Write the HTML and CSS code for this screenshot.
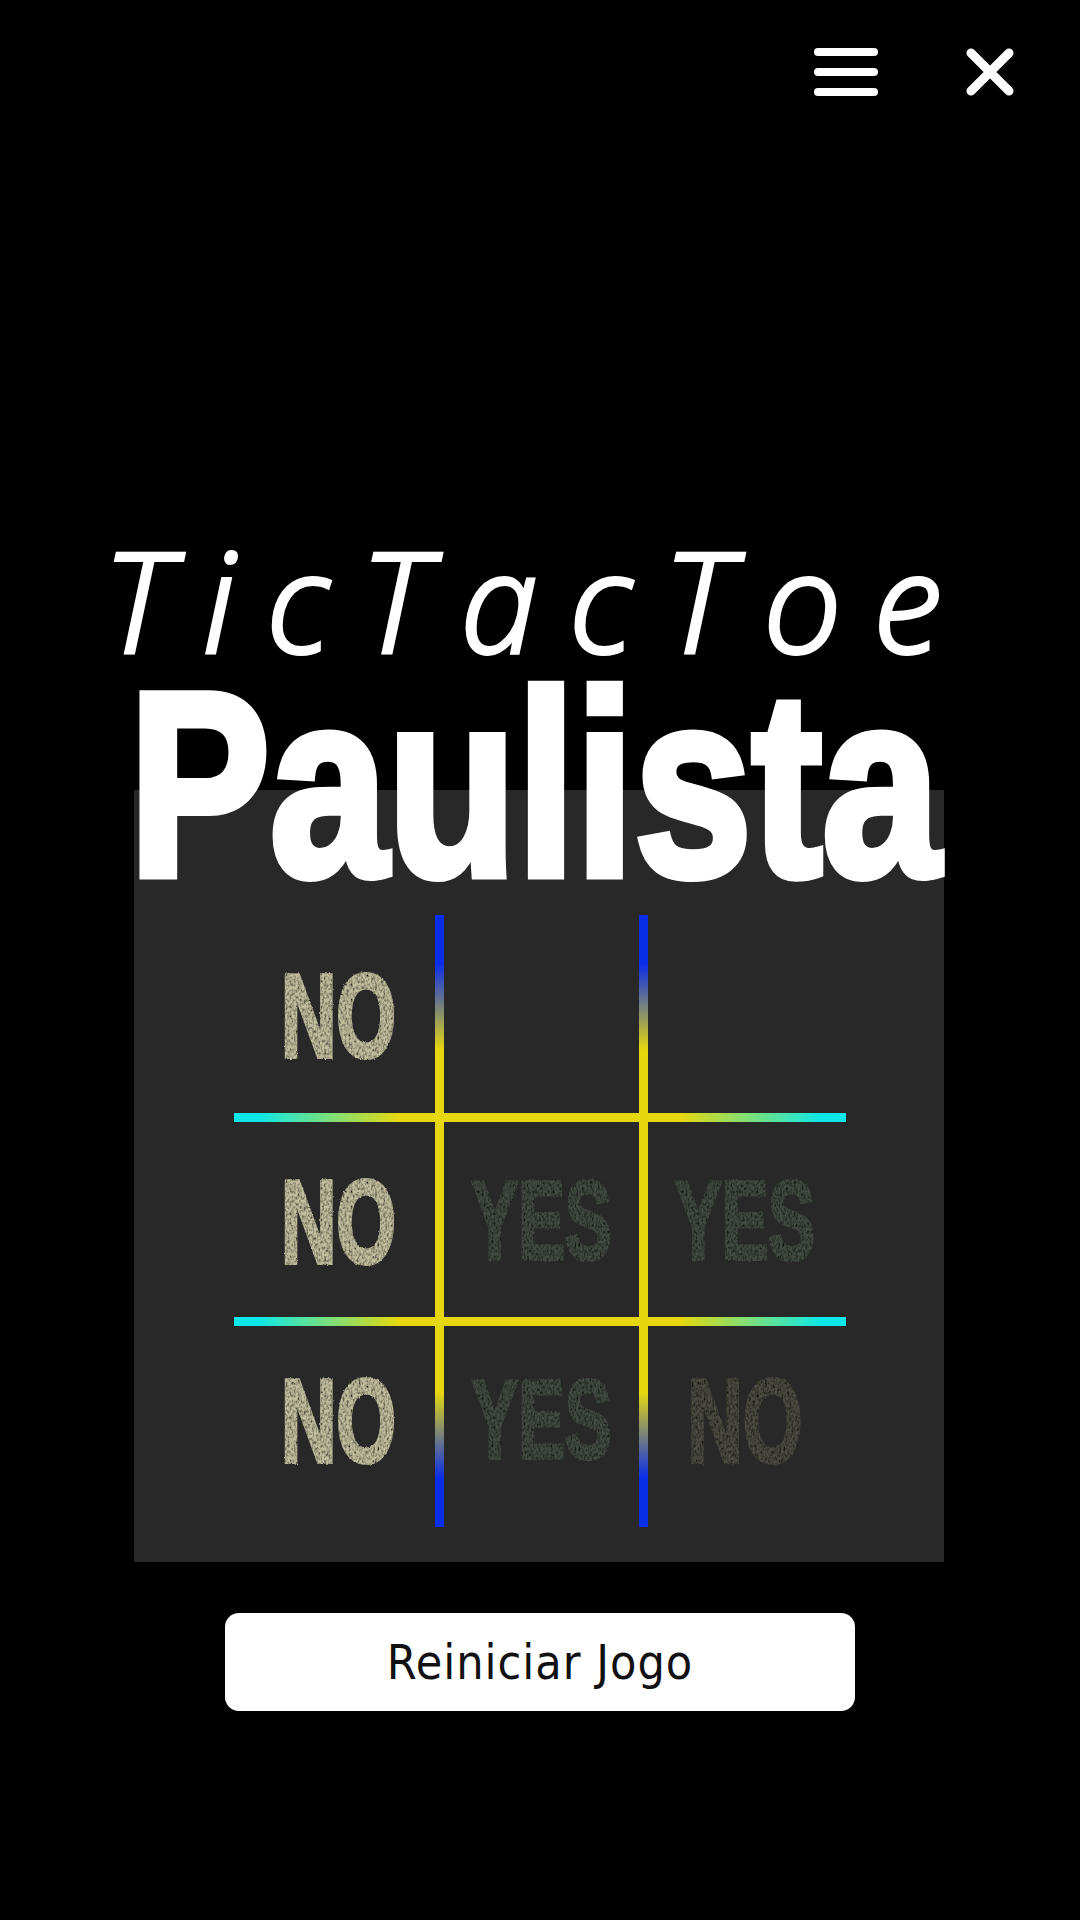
FILE: index.html
```html
<!DOCTYPE html>
<html lang="pt-BR">
<head>
  <meta charset="UTF-8">
  <meta name="viewport" content="width=device-width, initial-scale=1.0">
  <title>TicTacToe Paulista</title>
  <link rel="stylesheet" href="styles.css">
</head>
<body>
  <header class="topbar">
    <button class="icon-btn" type="button" aria-label="Menu">
      <svg width="64" height="48" viewBox="0 0 64 48">
        <path d="M4 4H60M4 24H60M4 44H60" stroke="#fff" stroke-width="8" stroke-linecap="round"/>
      </svg>
    </button>
    <button class="icon-btn" type="button" aria-label="Fechar">
      <svg width="48" height="48" viewBox="0 0 48 48">
        <path d="M5 5L43 43M43 5L5 43" stroke="#fff" stroke-width="9" stroke-linecap="round"/>
      </svg>
    </button>
  </header>

  <main class="game">
    <h1 class="title-script">TicTacToe</h1>
    <h2 class="title-block">Paulista</h2>

    <section class="panel">
      <div class="board">
        <div class="cell lit">NO</div>
        <div class="line-v line-v1"></div>
        <div class="cell"></div>
        <div class="line-v line-v2"></div>
        <div class="cell"></div>

        <div class="line-h line-h1"></div>

        <div class="cell lit">NO</div>
        <div class="cell yes">YES</div>
        <div class="cell yes right">YES</div>

        <div class="line-h line-h2"></div>

        <div class="cell lit last">NO</div>
        <div class="cell yes last">YES</div>
        <div class="cell dim right last">NO</div>
      </div>
    </section>

    <button class="restart" type="button">Reiniciar Jogo</button>
  </main>

  <!-- grain for the stamped letters -->
  <svg class="defs" width="0" height="0" aria-hidden="true">
    <filter id="grain" x="-5%" y="-5%" width="110%" height="110%">
      <feTurbulence type="fractalNoise" baseFrequency="0.32" numOctaves="2" seed="4" result="noise"/>
      <feDisplacementMap in="SourceGraphic" in2="noise" scale="3" result="rough"/>
      <feColorMatrix in="noise" type="matrix" values="0 0 0 0 0  0 0 0 0 0  0 0 0 0 0  2 0 0 0 -0.75" result="specks"/>
      <feComposite in="specks" in2="rough" operator="in" result="dark"/>
      <feMerge>
        <feMergeNode in="rough"/>
        <feMergeNode in="dark"/>
      </feMerge>
    </filter>
  </svg>
</body>
</html>
```

FILE: styles.css
```css
body {
  margin: 0;
  height: 1920px;
  overflow: hidden;
  background: #000;
  color: #fff;
  font-family: "Liberation Sans", Arial, sans-serif;
}

.topbar {
  display: flex;
  justify-content: flex-end;
  align-items: center;
  gap: 88px;
  padding: 48px 66px 0 0;
}
.icon-btn {
  display: flex;
  padding: 0;
  border: none;
  background: none;
}

.game {
  display: flex;
  flex-direction: column;
  align-items: center;
}

.title-script {
  margin: 432px 3px 0 0;
  height: 142px;
  font-family: "Open Sans", sans-serif;
  font-style: italic;
  font-weight: 300;
  font-size: 138px;
  line-height: 142px;
  letter-spacing: 32px;
  -webkit-text-stroke: 4px #fff;
  white-space: nowrap;
}

.title-block {
  position: relative;
  z-index: 1;
  margin: 15px 12px 0 0;
  height: 200px;
  font-family: "Liberation Sans", sans-serif;
  font-weight: 700;
  font-size: 262px;
  line-height: 200px;
  -webkit-text-stroke: 9px #fff;
  transform: scaleX(0.807);
  white-space: nowrap;
}

.panel {
  box-sizing: border-box;
  width: 810px;
  height: 772px;
  margin: -95px 3px 0 0;
  padding: 125px 0 0 100px;
  background: #282828;
}

.board {
  display: grid;
  grid-template-columns: 201px 9px 195px 9px 198px;
  grid-template-rows: 198px 9px 195px 9px 201px;
  width: 612px;
}

.cell {
  display: flex;
  justify-content: center;
  align-items: center;
  padding-top: 4px;
  font-family: "Liberation Sans", sans-serif;
  font-weight: 700;
  font-size: 118px;
  line-height: 1;
  -webkit-text-stroke: 4px currentColor;
  transform: scaleX(0.65);
  filter: url(#grain);
}
.cell.lit { color: #c2bf9f; margin-left: 8px; }
.cell.yes { color: #434b42; font-size: 111px; transform: scaleX(0.63); }
.cell.dim { color: #4b4c42; }
.cell.right { margin-right: 4px; }
.cell.last { padding-top: 0; padding-bottom: 12px; }

.line-v {
  grid-row: 1 / -1;
  background: linear-gradient(to bottom, #0a2de8 0%, #0a2de8 8%, #e6d70f 22%, #e6d70f 78%, #0a2de8 92%, #0a2de8 100%);
}
.line-v1 { grid-column: 2; }
.line-v2 { grid-column: 4; }

.line-h {
  grid-column: 1 / -1;
  z-index: 1;
  background: linear-gradient(to right, #0ee8e8 0%, #0ee8e8 4%, #e6d70f 27%, #e6d70f 73%, #0ee8e8 96%, #0ee8e8 100%);
}
.line-h1 { grid-row: 2; }
.line-h2 { grid-row: 4; }

.restart {
  box-sizing: border-box;
  width: 630px;
  height: 98px;
  margin-top: 51px;
  border: none;
  border-radius: 14px;
  background: #fff;
  color: #111;
  font-family: "DejaVu Sans", sans-serif;
  font-stretch: condensed;
  font-size: 48px;
  letter-spacing: 1px;
}

.defs {
  position: absolute;
}
```
